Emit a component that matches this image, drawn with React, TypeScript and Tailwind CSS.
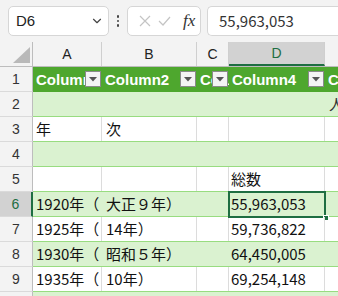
import { ChevronDown } from "lucide-react"

const cellFont = { fontFamily: '"Noto Sans CJK JP", "Noto Sans", sans-serif' }

type Row = { n: number; a?: string; b?: string; d?: string; e?: string; band: boolean; sel?: boolean }

const rows: Row[] = [
  { n: 2, band: true, e: "人" },
  { n: 3, band: false, a: "年", b: "次" },
  { n: 4, band: true },
  { n: 5, band: false, d: "総数" },
  { n: 6, band: true, a: "1920年（", b: "大正９年）", d: "55,963,053", sel: true },
  { n: 7, band: false, a: "1925年（", b: "14年）", d: "59,736,822" },
  { n: 8, band: true, a: "1930年（", b: "昭和５年）", d: "64,450,005" },
  { n: 9, band: false, a: "1935年（", b: "10年）", d: "69,254,148" },
  { n: 10, band: true },
]

function Filter() {
  return (
    <div className="absolute right-[1px] top-[4px] w-[16px] h-[16px] bg-[#f4f4f4] border border-[#8a8a8a] flex items-center justify-center">
      <svg width="8" height="5" viewBox="0 0 8 5">
        <polygon points="0,0 8,0 4,4.5" fill="#555" />
      </svg>
    </div>
  )
}

function HeadCell({ w, label, last }: { w: string; label: string; last?: boolean }) {
  return (
    <div className={`relative ${w} h-full overflow-hidden ${last ? "flex-1" : "shrink-0"}`}>
      <span className="absolute left-[3px] top-[2px] text-[15px] font-bold text-white whitespace-nowrap">{label}</span>
      {!last && <Filter />}
    </div>
  )
}

function DataRow({ r }: { r: Row }) {
  const line = r.band ? "" : "border-r border-[#dcdcdc]"
  return (
    <div className="flex h-[25px]">
      <div
        className={`w-[33px] shrink-0 flex items-center justify-center text-[14px] border-b border-[#dadada] ${
          r.sel ? "bg-[#d2d2d2] text-[#1e6e42] border-r-2 border-r-[#1e6e42]" : "bg-[#f3f3f3] text-[#333] border-r border-r-[#bdbdbd]"
        }`}
      >
        {r.n}
      </div>
      <div
        className={`flex flex-1 border-b border-[#98dc80] text-[15px] text-[#111] [text-spacing-trim:space-all] ${r.band ? "bg-[#daf2d0]" : "bg-white"}`}
        style={cellFont}
      >
        <div className={`w-[69px] shrink-0 pl-[3px] flex items-center whitespace-nowrap overflow-hidden ${line}`}>{r.a}</div>
        <div className={`w-[95px] shrink-0 pl-[4px] flex items-center whitespace-nowrap overflow-hidden ${line}`}>{r.b}</div>
        <div className={`w-[32px] shrink-0 ${line}`}></div>
        <div className={`relative w-[96px] shrink-0 pl-[2px] flex items-center whitespace-nowrap ${line}`}>
          {r.d}
          {r.sel && (
            <>
              <div className="absolute left-[-1px] top-[-1px] right-[-1px] bottom-[-2px] border-2 border-[#1e6e42]"></div>
              <div className="absolute right-[-4px] bottom-[-5px] w-[6px] h-[6px] bg-[#1e6e42] border border-white"></div>
            </>
          )}
        </div>
        <div className="flex-1 flex items-center overflow-hidden pl-[4px] text-[#333]">{r.e}</div>
      </div>
    </div>
  )
}

export default function App() {
  return (
    <div className="w-[338px] h-[296px] overflow-hidden bg-[#f3f3f3]" style={{ fontFamily: '"Segoe UI", "Liberation Sans", sans-serif' }}>
      {/* formula bar */}
      <div className="h-[42px] flex items-center pl-[8px] gap-[6px]">
        <div className="w-[101px] h-[30px] bg-white border border-[#d6d6d6] rounded-[5px] flex items-center justify-between pl-[7px] pr-[4px] shrink-0">
          <span className="text-[15px] text-[#222]">D6</span>
          <ChevronDown className="w-[14px] h-[14px] text-[#444]" strokeWidth={2} />
        </div>
        <div className="flex flex-col gap-[2px] w-[6px] items-center shrink-0">
          <span className="w-[2.5px] h-[2.5px] bg-[#444] rounded-full"></span>
          <span className="w-[2.5px] h-[2.5px] bg-[#444] rounded-full"></span>
          <span className="w-[2.5px] h-[2.5px] bg-[#444] rounded-full"></span>
        </div>
        <div className="w-[74px] h-[30px] bg-white border border-[#d6d6d6] rounded-[5px] flex items-center pl-[11px] gap-[7px] shrink-0">
          <svg width="12" height="12" viewBox="0 0 12 12">
            <path d="M1 1L11 11M11 1L1 11" stroke="#c4c4c4" strokeWidth="1.2" fill="none" />
          </svg>
          <svg width="13" height="10" viewBox="0 0 13 10">
            <path d="M1 5L5 9L12 1" stroke="#c4c4c4" strokeWidth="1.2" fill="none" />
          </svg>
          <span className="ml-[5px] text-[17px] italic text-[#333]" style={{ fontFamily: '"Liberation Serif", serif' }}>
            fx
          </span>
        </div>
        <div className="flex-1 h-[30px] bg-white border border-[#d6d6d6] rounded-l-[5px] border-r-0 flex items-center pl-[11px] -mr-px">
          <span className="text-[15px] text-[#333]" style={cellFont}>55,963,053</span>
        </div>
      </div>

      {/* column headings */}
      <div className="flex h-[25px] border-b border-[#bdbdbd] text-[14px] text-[#222]">
        <div className="w-[33px] shrink-0 border-r border-[#bdbdbd] flex items-end justify-end pr-[2px] pb-[3px]">
          <svg width="17" height="16" viewBox="0 0 17 16">
            <polygon points="17,0 17,16 0,16" fill="#b9b9b9" />
          </svg>
        </div>
        <div className="w-[69px] shrink-0 border-r border-[#cfcfcf] flex items-center justify-center">A</div>
        <div className="w-[95px] shrink-0 border-r border-[#cfcfcf] flex items-center justify-center">B</div>
        <div className="w-[32px] shrink-0 border-r border-[#cfcfcf] flex items-center justify-center">C</div>
        <div className="w-[96px] shrink-0 border-r border-[#cfcfcf] bg-[#d2d2d2] border-b-2 border-b-[#1e6e42] flex items-center justify-center text-[#1e6e42]">
          D
        </div>
        <div className="flex-1"></div>
      </div>

      {/* table header row */}
      <div className="flex h-[25px]">
        <div className="w-[33px] shrink-0 bg-[#f3f3f3] border-r border-[#bdbdbd] border-b border-b-[#dadada] flex items-center justify-center text-[14px] text-[#333]">
          1
        </div>
        <div className="flex flex-1 bg-[#4ea72e] border-b border-[#4ea72e]" style={{ fontFamily: '"Liberation Sans", Arial, sans-serif' }}>
          <HeadCell w="w-[69px]" label="Column1" />
          <HeadCell w="w-[95px]" label="Column2" />
          <HeadCell w="w-[32px]" label="Column3" />
          <HeadCell w="w-[96px]" label="Column4" />
          <HeadCell w="w-[13px]" label="Column5" last />
        </div>
      </div>

      {rows.map((r) => (
        <DataRow key={r.n} r={r} />
      ))}
    </div>
  )
}
